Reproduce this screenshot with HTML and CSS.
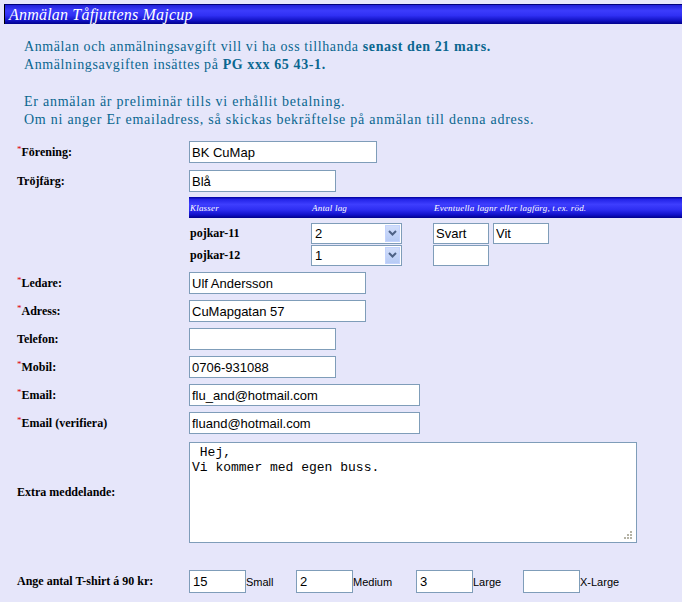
FILE: index.html
```html
<!DOCTYPE html>
<html lang="sv">
<head>
<meta charset="utf-8">
<title>Anmälan Tåfjuttens Majcup</title>
<link rel="stylesheet" href="styles.css">
</head>
<body>
<div class="title">Anmälan Tåfjuttens Majcup</div>
<div class="intro">
  <p>Anmälan och anmälningsavgift vill vi ha oss tillhanda <b>senast den 21 mars.</b><br>Anmälningsavgiften insättes på <b>PG xxx 65 43-1.</b></p>
  <p class="p2">Er anmälan är preliminär tills vi erhållit betalning.<br>Om ni anger Er emailadress, så skickas bekräftelse på anmälan till denna adress.</p>
</div>
<form class="form">
  <div class="row r-first">
    <div class="lbl"><span class="req">*</span>Förening:</div>
    <input class="in w187" type="text" value="BK CuMap">
  </div>
  <div class="row r-troj">
    <div class="lbl">Tröjfärg:</div>
    <input class="in w146" type="text" value="Blå">
  </div>
  <div class="row r-classes">
    <div class="lbl"></div>
    <div class="classes">
      <div class="chead">
        <span class="c1">Klasser</span>
        <span class="c2">Antal lag</span>
        <span class="c3">Eventuella lagnr eller lagfärg, t.ex. röd.</span>
      </div>
      <div class="crow">
        <span class="c1 cname">pojkar-11</span>
        <div class="c2"><div class="sel"><span class="selval">2</span><span class="selbtn"><svg width="9" height="6" viewBox="0 0 9 6"><path d="M1 1 L4.5 4.5 L8 1" fill="none" stroke="#4d6185" stroke-width="2"/></svg></span></div></div>
        <div class="c3 teams"><input class="in tin" type="text" value="Svart"><input class="in tin" type="text" value="Vit"></div>
      </div>
      <div class="crow">
        <span class="c1 cname">pojkar-12</span>
        <div class="c2"><div class="sel"><span class="selval">1</span><span class="selbtn"><svg width="9" height="6" viewBox="0 0 9 6"><path d="M1 1 L4.5 4.5 L8 1" fill="none" stroke="#4d6185" stroke-width="2"/></svg></span></div></div>
        <div class="c3 teams"><input class="in tin" type="text" value=""></div>
      </div>
    </div>
  </div>
  <div class="row r-ledare">
    <div class="lbl"><span class="req">*</span>Ledare:</div>
    <input class="in w176" type="text" value="Ulf Andersson">
  </div>
  <div class="row">
    <div class="lbl"><span class="req">*</span>Adress:</div>
    <input class="in w176" type="text" value="CuMapgatan 57">
  </div>
  <div class="row">
    <div class="lbl">Telefon:</div>
    <input class="in w146" type="text" value="">
  </div>
  <div class="row">
    <div class="lbl"><span class="req">*</span>Mobil:</div>
    <input class="in w146" type="text" value="0706-931088">
  </div>
  <div class="row">
    <div class="lbl"><span class="req">*</span>Email:</div>
    <input class="in w230" type="text" value="flu_and@hotmail.com">
  </div>
  <div class="row">
    <div class="lbl"><span class="req">*</span>Email (verifiera)</div>
    <input class="in w230" type="text" value="fluand@hotmail.com">
  </div>
  <div class="row r-msg">
    <div class="lbl">Extra meddelande:</div>
    <div class="msgwrap">
      <textarea class="msg"> Hej,
Vi kommer med egen buss.</textarea>
      <svg class="grip" width="9" height="9" viewBox="0 0 9 9"><g fill="#b5b3a5"><rect x="6" y="0" width="2" height="2"/><rect x="3" y="3" width="2" height="2"/><rect x="6" y="3" width="2" height="2"/><rect x="0" y="6" width="2" height="2"/><rect x="3" y="6" width="2" height="2"/><rect x="6" y="6" width="2" height="2"/></g></svg>
    </div>
  </div>
  <div class="row r-shirt">
    <div class="lbl">Ange antal T-shirt á 90 kr:</div>
    <div class="shirts">
      <input class="in sin" type="text" value="15"><span class="size">Small</span>
      <input class="in sin" type="text" value="2"><span class="size">Medium</span>
      <input class="in sin" type="text" value="3"><span class="size">Large</span>
      <input class="in sin" type="text" value=""><span class="size">X-Large</span>
    </div>
  </div>
</form>
</body>
</html>
```
FILE: styles.css
```css
html, body {
  margin: 0;
  padding: 0;
  background: #e6e6fa;
}
body {
  font-family: "Liberation Serif", "Times New Roman", serif;
  height: 602px;
  overflow: hidden;
}
.title {
  margin: 4px 0 0 4px;
  height: 20px;
  box-sizing: border-box;
  border-top: 1px solid #00007a;
  border-left: 1px solid #000;
  background: linear-gradient(to bottom, #2020d8 0%, #3c3cfc 30%, #3030f4 55%, #1414c8 80%, #00008c 100%);
  color: #fff;
  font-style: italic;
  font-size: 16px;
  letter-spacing: 0.2px;
  line-height: 19px;
  padding-left: 4px;
  white-space: nowrap;
}
.intro {
  margin-top: 14px;
  padding-left: 24px;
  color: #0a6690;
  font-size: 14px;
  letter-spacing: 0.6px;
  line-height: 18px;
}
.intro p {
  margin: 0;
}
.intro .p2 {
  margin-top: 19px;
  letter-spacing: 0.75px;
}
.form {
  margin-top: 12px;
  display: flex;
  flex-direction: column;
}
.row {
  display: flex;
  align-items: center;
  margin-top: 6px;
}
.row.r-first { margin-top: 0; }
.row.r-troj { margin-top: 7px; }
.row.r-classes { margin-top: 5px; align-items: flex-start; }
.row.r-ledare { margin-top: 6px; }
.row.r-msg { margin-top: 8px; }
.row.r-shirt { margin-top: 27px; }
.lbl {
  width: 172px;
  padding-left: 17px;
  flex: none;
  font-weight: bold;
  font-size: 12px;
  color: #000;
  white-space: nowrap;
}
.req {
  color: #e00000;
  font-size: 9px;
  vertical-align: 4px;
  font-weight: normal;
}
.in {
  box-sizing: border-box;
  height: 22px;
  border: 1px solid #7f9db9;
  background: #fff;
  font-family: "Liberation Sans", Arial, sans-serif;
  font-size: 13px;
  color: #000;
  padding: 0 2px;
  margin: 0;
  outline: none;
}
.w187 { width: 188px; }
.w146 { width: 147px; }
.w176 { width: 177px; }
.w230 { width: 231px; }
.classes {
  flex: 1;
}
.chead {
  height: 21px;
  box-sizing: border-box;
  display: grid;
  grid-template-columns: 122px 122px 1fr;
  align-items: center;
  background: linear-gradient(to bottom, #00009c 0%, #2424e8 12%, #3e3efe 35%, #2e2ef2 60%, #1010c8 85%, #00008a 100%);
  color: #fff;
  font-style: italic;
  font-size: 9px;
  letter-spacing: 0.2px;
  padding-left: 1px;
}
.chead span { white-space: nowrap; }
.crow {
  display: grid;
  grid-template-columns: 122px 122px 1fr;
  align-items: center;
  height: 22px;
}
.chead + .crow { margin-top: 4px; }
.cname {
  font-weight: bold;
  font-size: 12px;
  padding-left: 1px;
}
.sel {
  box-sizing: border-box;
  width: 91px;
  height: 21px;
  border: 1px solid #7f9db9;
  background: #fff;
  display: flex;
  align-items: stretch;
  font-family: "Liberation Sans", Arial, sans-serif;
  font-size: 13px;
}
.selval {
  flex: 1;
  padding-left: 3px;
  line-height: 19px;
}
.selbtn {
  width: 15px;
  margin: 1px;
  background: linear-gradient(to bottom, #d2defb, #b7cbf5);
  border: 1px solid #c3d3fd;
  box-sizing: border-box;
  display: flex;
  align-items: center;
  justify-content: center;
}
.teams {
  display: flex;
  gap: 4px;
}
.tin {
  width: 56px;
  height: 21px;
}
.msgwrap {
  position: relative;
  width: 448px;
  height: 101px;
}
.msg {
  box-sizing: border-box;
  display: block;
  width: 448px;
  height: 101px;
  border: 1px solid #7f9db9;
  background: #fff;
  font-family: "Liberation Mono", "Courier New", monospace;
  font-size: 13px;
  line-height: 15px;
  padding: 2px 2px;
  margin: 0;
  resize: none;
  outline: none;
}
.grip {
  position: absolute;
  right: 4px;
  bottom: 3px;
}
.shirts {
  display: flex;
  align-items: center;
}
.sin {
  width: 57px;
  height: 23px;
  padding-left: 3px;
}
.size {
  font-family: "Liberation Sans", Arial, sans-serif;
  font-size: 11px;
  margin-top: 0;
}
.size:nth-of-type(1) { width: 50px; }
.size:nth-of-type(2) { width: 63px; }
.size:nth-of-type(3) { width: 50px; }
```
